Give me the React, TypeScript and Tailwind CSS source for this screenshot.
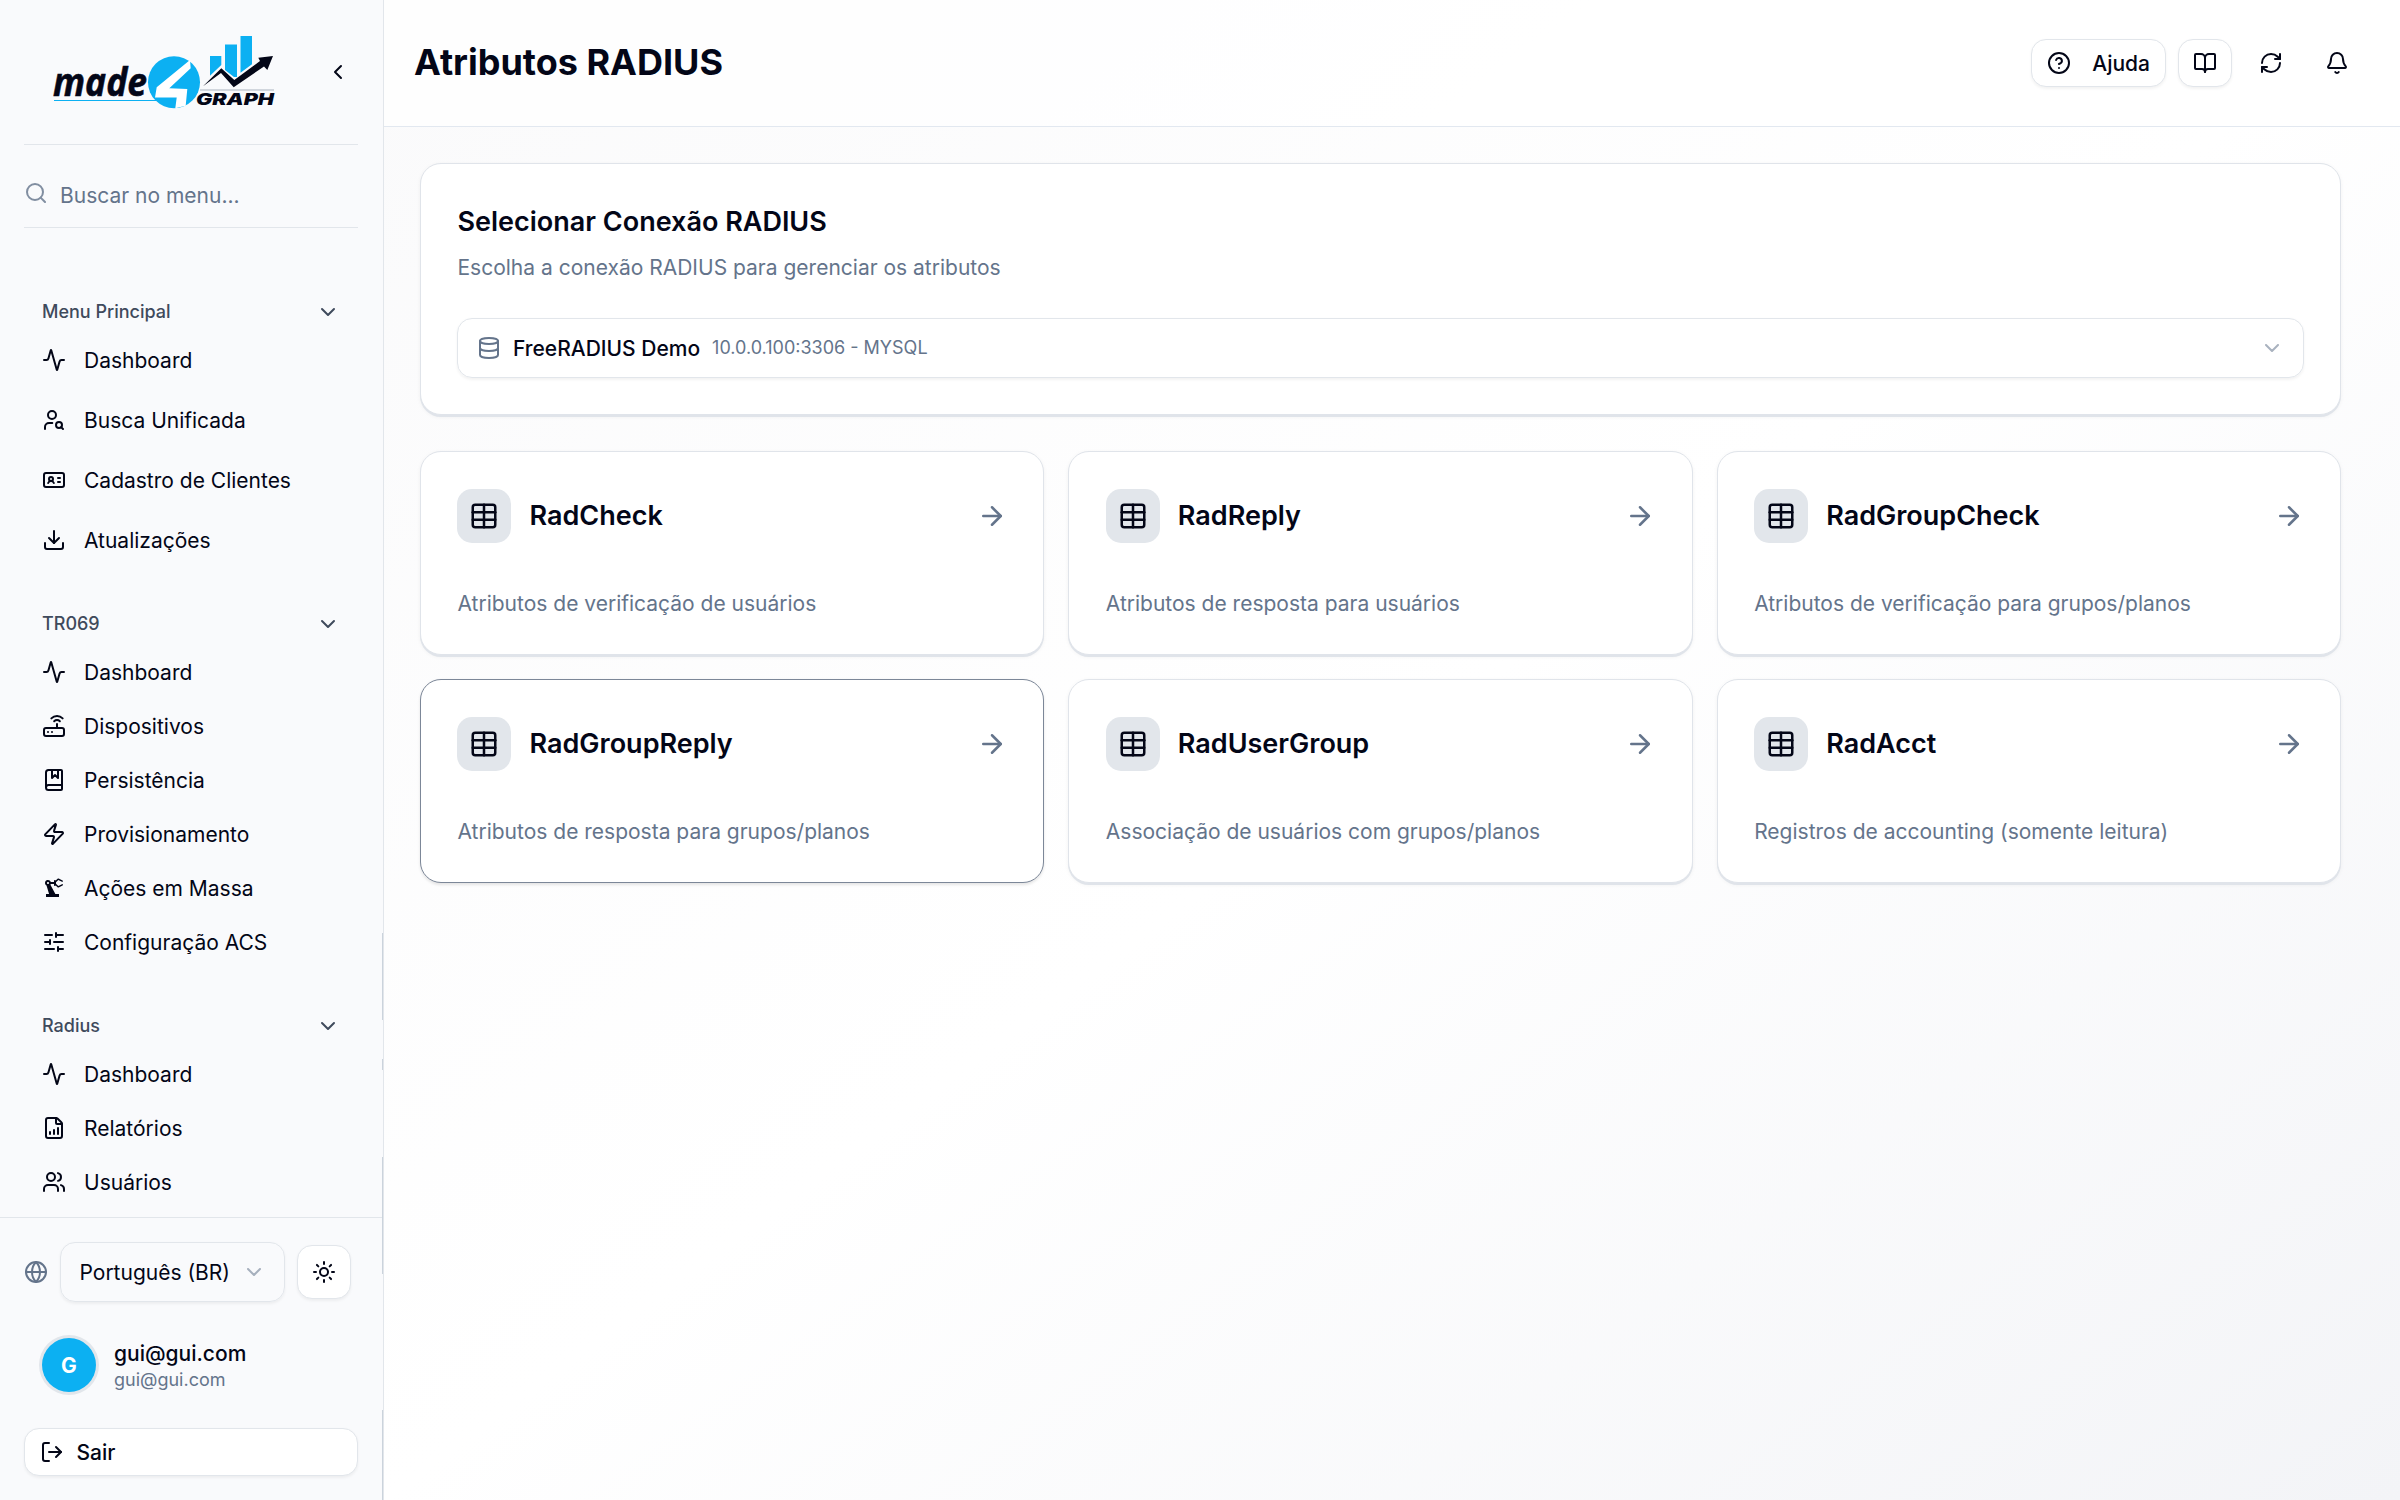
import React from "react";
import {
  Activity, ArrowRight, Bell, BookMarked, BookOpen, ChevronDown, ChevronLeft, CircleQuestionMark, Database,
  Download, FileChartColumnIncreasing, Globe, IdCard, LogOut, RefreshCw, Router, Search, SlidersHorizontal,
  Sun, Table, Users, UserSearch, Zap,
} from "lucide-react";
import { MdPrecisionManufacturing } from "react-icons/md";

type IconType = React.ComponentType<{ className?: string }>;
type Section = { title: string; gap: string; items: [string, IconType][] };

const sections: Section[] = [
  {
    title: "Menu Principal",
    gap: "gap-2",
    items: [
      ["Dashboard", Activity],
      ["Busca Unificada", UserSearch],
      ["Cadastro de Clientes", IdCard],
      ["Atualizações", Download],
    ],
  },
  {
    title: "TR069",
    gap: "gap-1",
    items: [
      ["Dashboard", Activity],
      ["Dispositivos", Router],
      ["Persistência", BookMarked],
      ["Provisionamento", Zap],
      ["Ações em Massa", MdPrecisionManufacturing],
      ["Configuração ACS", SlidersHorizontal],
    ],
  },
  {
    title: "Radius",
    gap: "gap-1",
    items: [
      ["Dashboard", Activity],
      ["Relatórios", FileChartColumnIncreasing],
      ["Usuários", Users],
    ],
  },
];

const cards = [
  ["RadCheck", "Atributos de verificação de usuários"],
  ["RadReply", "Atributos de resposta para usuários"],
  ["RadGroupCheck", "Atributos de verificação para grupos/planos"],
  ["RadGroupReply", "Atributos de resposta para grupos/planos"],
  ["RadUserGroup", "Associação de usuários com grupos/planos"],
  ["RadAcct", "Registros de accounting (somente leitura)"],
];

function Logo() {
  return (
    <svg viewBox="0 1 226 76" className="block h-[50.667px] w-[150.667px]">
      <text x="3" y="63" fontFamily="Open Sans" fontSize="40" fontWeight="700" fontStyle="italic" fill="#030617" stroke="#030617" strokeWidth="0.6" textLength="94" lengthAdjust="spacingAndGlyphs">made</text>
      <rect x="4" y="67" width="104" height="1" fill="#0cb0f2" />
      <circle cx="124" cy="49.200" r="26" fill="#0cb0f2" />
      <path d="M140 27 L106.700 54.300 L105 64.500 H126.700 L125.300 75.200 L135.700 72.800 L137.300 56 L119.300 55.300 L140.700 35.300 Z" fill="#fff" />
      <path d="M160 23h11.300v9L160 42.700zM175 11.500h12v32.500h-3L175 37zM190.500 3H202v28.300l-11.500 8.400z" fill="#0cb0f2" />
      <path d="M153 53.300 L171.300 35.300 L184.300 47 L210 28 L208.300 24.700 L223 23 L217.300 37 L214 33.500 L183.700 54.300 L171 40 Z" fill="#030617" />
      <rect x="150" y="56.500" width="74" height="1" fill="#a9b1be" />
      <text x="146" y="71.500" fontFamily="Inter" fontSize="15.500" fontWeight="900" fontStyle="italic" fill="#030617" textLength="78" lengthAdjust="spacingAndGlyphs">GRAPH</text>
    </svg>
  );
}

function Sidebar() {
  return (
    <aside className="relative flex w-64 shrink-0 flex-col border-r border-[#e2e6eb] bg-[#f9fafc] pr-[0.67px]">
      <div className="mx-4 flex h-[96.67px] shrink-0 items-center justify-between border-b border-[#e2e6eb] pr-[5.6px] pl-[17.33px]">
        <Logo />
        <ChevronLeft className="size-4" />
      </div>
      <div className="mx-4 flex h-[55px] shrink-0 items-center gap-2 border-b border-[#e2e6eb] pt-3 text-sm text-[#64748b]">
        <Search className="mb-0.5 size-4 opacity-80" />
        <span className="pt-[1.4px]">Buscar no menu...</span>
      </div>
      <nav className="mt-[40.33px] flex min-h-0 flex-1 flex-col gap-6 overflow-hidden px-4">
        {sections.map((s) => (
          <div key={s.title} className="shrink-0">
            <div className="flex h-8 items-center justify-between px-3 text-xs font-medium text-[#3f4a5c]">
              {s.title}
              <ChevronDown className="size-4" />
            </div>
            <div className={`flex flex-col ${s.gap}`}>
              {s.items.map(([label, Icon]) => (
                <a key={label} className="flex h-8 items-center gap-3 px-3 text-sm">
                  <Icon className="size-4" />
                  <span className="pt-[1.4px]">{label}</span>
                </a>
              ))}
            </div>
          </div>
        ))}
      </nav>
      <footer className="flex shrink-0 flex-col gap-3 border-t border-[#e2e6eb] p-4">
        <div className="flex items-center gap-2">
          <Globe className="size-4 text-[#64748b]" />
          <div className="flex h-10 w-[150px] items-center justify-between rounded-[10px] border border-[#e2e6eb] px-[12.33px] text-sm shadow-xs">
            <span className="pt-[1.4px]">Português (BR)</span>
            <ChevronDown className="size-4 text-[#64748b] opacity-55" />
          </div>
          <button className="flex size-9 items-center justify-center rounded-[10px] border border-[#e2e6eb] bg-white shadow-xs">
            <Sun className="size-4" />
          </button>
        </div>
        <div className="flex items-center gap-3 p-3">
          <div className="flex size-9 items-center justify-center rounded-full bg-[#0cb0f2] pt-[0.7px] text-sm font-bold text-white ring-2 ring-[#e2e6eb]">G</div>
          <div>
            <div className="h-5 pt-[0.7px] text-sm font-medium">gui@gui.com</div>
            <div className="text-xs text-[#64748b]">gui@gui.com</div>
          </div>
        </div>
        <button className="flex h-8 items-center gap-2 rounded-[10px] border border-[#e2e6eb] bg-white px-[10.33px] text-sm font-medium shadow-xs">
          <LogOut className="size-4" />
          <span className="pt-[1.4px]">Sair</span>
        </button>
      </footer>
      <div className="absolute top-[622px] right-0 flex w-[0.67px] flex-col">
        <div className="h-[58px] bg-[#cbd3dc]" />
        <div className="mt-[26px] h-[7px] bg-[#cbd3dc]" />
        <div className="mt-[58px] h-[78px] bg-[#cbd3dc]" />
        <div className="mt-[91px] h-[60px] bg-[#cbd3dc]" />
      </div>
    </aside>
  );
}

export default function App() {
  return (
    <div className="flex h-[1000px] w-[1600px] overflow-hidden bg-white font-['Inter',sans-serif] text-[#030617] antialiased [zoom:1.5]">
      <Sidebar />
      <main className="flex min-w-0 flex-1 flex-col bg-linear-to-br from-[#fafafb] via-white via-50% to-[#f3f4f7]">
        <header className="flex h-[84.67px] shrink-0 items-center justify-between border-b border-[#e2e8f0] bg-white/80 pr-6 pl-5">
          <h1 className="pb-[1.4px] text-2xl font-bold">Atributos RADIUS</h1>
          <div className="flex items-center gap-2">
            <button className="flex h-8 items-center gap-3.5 rounded-[10px] border border-[#e2e6eb] bg-white px-2.5 text-sm font-medium shadow-xs">
              <CircleQuestionMark className="size-4" />
              <span className="pt-[1.4px]">Ajuda</span>
            </button>
            <button className="flex h-8 w-9 items-center justify-center rounded-[10px] border border-[#e2e6eb] bg-white shadow-xs">
              <BookOpen className="size-4" />
            </button>
            <button className="flex h-8 w-9 items-center justify-center">
              <RefreshCw className="size-4" />
            </button>
            <button className="flex h-8 w-9 items-center justify-center">
              <Bell className="size-4" />
            </button>
          </div>
        </header>
        <div className="flex flex-col gap-6 pt-[24.33px] pr-[39.33px] pl-6">
          <section className="h-[168px] rounded-[14px] border border-[#e0e4ea] bg-white p-[24.33px] shadow-[0_1.34px_0_#e0e4ea,0_1px_3px_#0000000d]">
            <h2 className="text-lg leading-7 font-semibold">Selecionar Conexão RADIUS</h2>
            <p className="mt-1.5 h-5 pt-[0.7px] text-sm text-[#64748b]">Escolha a conexão RADIUS para gerenciar os atributos</p>
            <div className="mt-6 flex h-10 items-center gap-2 rounded-[10px] border border-[#e2e6eb] px-[12.33px] shadow-xs">
              <Database className="size-4 text-[#64748b]" />
              <span className="pt-[1.4px] text-sm font-medium">FreeRADIUS Demo</span>
              <span className="text-xs text-[#64748b]">10.0.0.100:3306 - MYSQL</span>
              <ChevronDown className="ml-auto size-4 text-[#64748b] opacity-55" />
            </div>
          </section>
          <div className="grid grid-cols-3 gap-4">
            {cards.map(([name, desc]) => (
              <article
                key={name}
                className={`h-[136px] rounded-[14px] border bg-white p-[24.33px] ${
                  name === "RadGroupReply"
                    ? "border-[#7c8798] shadow-[0_1px_2px_#0000001a]"
                    : "border-[#e0e4ea] shadow-[0_1.34px_0_#e0e4ea,0_1px_3px_#0000000d]"
                }`}
              >
                <div className="flex items-center gap-3">
                  <div className="flex size-9 items-center justify-center rounded-[10px] bg-[#e2e6eb]">
                    <Table className="size-5" />
                  </div>
                  <h3 className="text-lg font-semibold">{name}</h3>
                  <ArrowRight className="ml-auto size-5 text-[#64748b]" />
                </div>
                <p className="mt-[30.7px] text-sm text-[#64748b]">{desc}</p>
              </article>
            ))}
          </div>
        </div>
      </main>
    </div>
  );
}
